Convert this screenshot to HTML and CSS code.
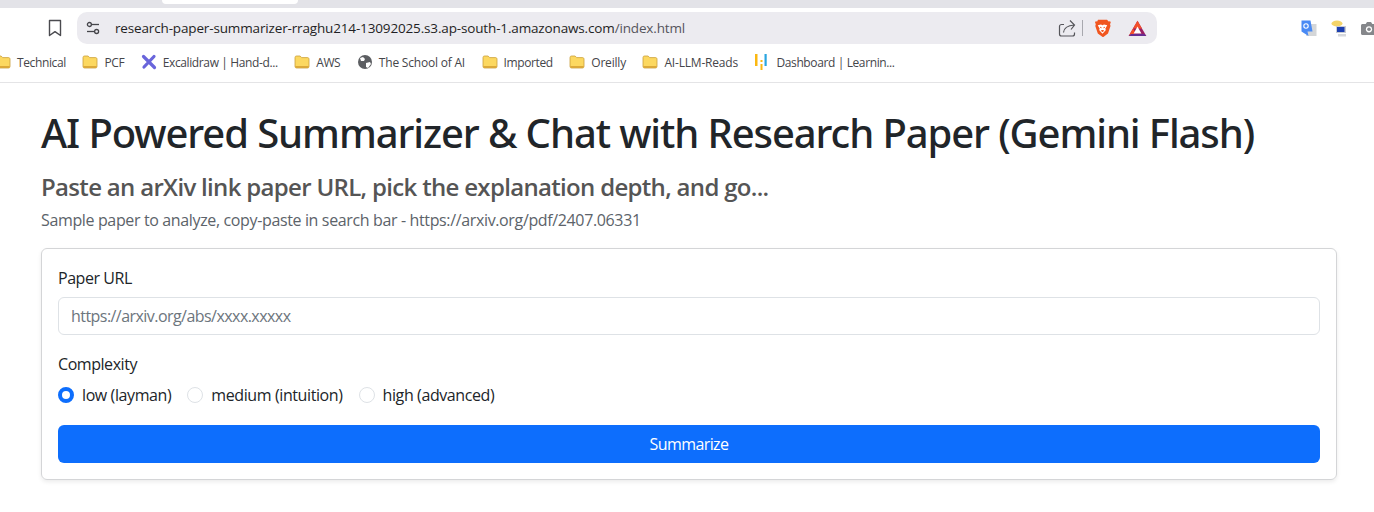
FILE: index.html
```html
<!DOCTYPE html>
<html lang="en">
  <head>
    <meta charset="UTF-8" />
    <meta name="viewport" content="width=device-width, initial-scale=1.0" />
    <title>Research Paper Summarizer</title>
    <link rel="stylesheet" href="styles.css">
  </head>
  <body>
    <svg class="defs" width="0" height="0">
      <symbol id="folder" viewBox="0 0 16 14">
        <path d="M1 2.500C1 1.700 1.600 1 2.400 1h3.700l1.600 1.600h5.900c.8 0 1.400.7 1.400 1.500v7.400c0 .8-.6 1.500-1.400 1.500H2.400c-.8 0-1.400-.7-1.400-1.500z" fill="#fcd860" stroke="#c9a03c" stroke-width=".8"/>
        <path d="M1.200 11.600c0 .8.600 1.300 1.200 1.300h11.200c.6 0 1.200-.5 1.200-1.300v-.6H1.200z" fill="#dca93a"/>
      </symbol>
    </svg>

    <div class="tabstrip">
      <div class="tab"></div>
    </div>

    <div class="toolbar">
      <svg class="bookmark-star" width="16" height="18" viewBox="0 0 16 18">
        <path d="M2.500 1.500h11v15L8 12.600 2.500 16.500z" fill="none" stroke="#4a4a4f" stroke-width="1.400" stroke-linejoin="round"/>
      </svg>
      <div class="omnibox">
        <svg class="site-icon" width="14" height="14" viewBox="0 0 14 14">
          <g fill="none" stroke="#45454a" stroke-width="1.300">
            <circle cx="3.400" cy="3.500" r="2"/>
            <path d="M6 3.500h7"/>
            <circle cx="10.600" cy="10.500" r="2"/>
            <path d="M1 10.500h7"/>
          </g>
        </svg>
        <span class="url">research-paper-summarizer-rraghu214-13092025.s3.ap-south-1.amazonaws.com<span class="url-path">/index.html</span></span>
        <svg class="share-icon" width="18" height="18" viewBox="0 0 18 18">
          <path d="M6 5.500H3.500a2 2 0 0 0-2 2V15a2 2 0 0 0 2 2h11a2 2 0 0 0 2-2v-1.500" fill="none" stroke="#55555a" stroke-width="1.200"/>
          <path d="M5.500 13.500c.4-4.500 3.500-7 10.800-7.500M12 1.500l4.500 4.500-3.500 4.500" fill="none" stroke="#55555a" stroke-width="1.200"/>
        </svg>
        <span class="omni-sep"></span>
        <svg class="brave-icon" width="17" height="19" viewBox="0 0 17 19">
          <path d="M4 .8h9l1.600 1.800 1.600-.3.600 1.500-.8 1.300.5 2-2.500 7.500-4.300 3.200a1.200 1.200 0 0 1-1.400 0L3.800 14.600 1.300 7.100l.5-2L1 3.800l.6-1.500 1.600.3z" fill="#f1561f"/>
          <path d="M3.800 6.200L7 5.600l1.500.6 1.500-.6 3.200.6-1.900 3.600.6 1.300-3.400 3.700-3.400-3.700.6-1.300z" fill="#fff"/>
          <path d="M6 8.200l1.600.6M11 8.200l-1.600.6M7.500 11.500h2L8.500 13z" fill="#f1561f" stroke="#f1561f" stroke-width=".9"/>
        </svg>
        <svg class="bat-icon" width="19" height="17" viewBox="0 0 19 17">
          <path d="M9.500.8L18.300 16H.7z" fill="#9b1f63"/>
          <path d="M9.500.8L14 8.500H5z" fill="#f4502a"/>
          <path d="M.7 16L5 8.500l2 3.500-1.500 2.500z" fill="#f4502a"/>
          <path d="M.7 16h17.600l-2-2H3z" fill="#662d91"/>
          <path d="M9.500 6.500l3.900 6.900H5.600z" fill="#fff"/>
        </svg>
      </div>
      <div class="extensions">
        <svg width="16" height="17" viewBox="0 0 16 17">
          <path d="M7 4h8.500v12H5z" fill="#d4d6d8"/>
          <path d="M.5.500h9l2 11H6.500l1 4.500L.5 11.500z" fill="#4a8af4"/>
          <circle cx="5" cy="6" r="2.200" fill="none" stroke="#fff" stroke-width="1.100"/>
        </svg>
        <svg width="16" height="17" viewBox="0 0 16 17">
          <ellipse cx="6" cy="3.500" rx="5.500" ry="3" fill="#f4d46a"/>
          <rect x="5" y="6" width="10" height="7" fill="#c9ccd2"/>
          <rect x="6" y="7" width="7.500" height="5" fill="#1c3fb0"/>
          <rect x="7" y="14" width="8" height="2.500" fill="#d6d8dc"/>
        </svg>
        <svg width="16" height="15" viewBox="0 0 16 15">
          <path d="M1.500 3h3.200L6 1h4l1.300 2h3.200c.8 0 1.500.7 1.500 1.500v8c0 .8-.7 1.500-1.500 1.500h-13C.7 14 0 13.300 0 12.500v-8C0 3.700.7 3 1.500 3z" fill="#85878b"/>
          <circle cx="8" cy="8.300" r="3.100" fill="#fff"/>
          <circle cx="8" cy="8.300" r="1.800" fill="#85878b"/>
        </svg>
      </div>
    </div>

    <div class="bookmarks">
      <a class="bm bm-first"><svg class="bm-icon"><use href="#folder"/></svg>Technical</a>
      <a class="bm"><svg class="bm-icon"><use href="#folder"/></svg>PCF</a>
      <a class="bm">
        <svg class="bm-icon" viewBox="0 0 16 16">
          <path d="M2.500 2.500L13.500 13.500M13 2.500L3 13" fill="none" stroke="#6965db" stroke-width="3.200" stroke-linecap="round"/>
        </svg>Excalidraw | Hand-d...</a>
      <a class="bm"><svg class="bm-icon"><use href="#folder"/></svg>AWS</a>
      <a class="bm bm-wide">
        <svg class="bm-icon" viewBox="0 0 16 16">
          <circle cx="8" cy="8" r="7" fill="#5c5e62"/>
          <path d="M3 4l3-1 2 2-1 2-3 0zM9 9l4-1 1 2-3 4-2-1z" fill="#fff"/>
        </svg>The School of AI</a>
      <a class="bm"><svg class="bm-icon"><use href="#folder"/></svg>Imported</a>
      <a class="bm bm-wide"><svg class="bm-icon"><use href="#folder"/></svg>Oreilly</a>
      <a class="bm bm-wide"><svg class="bm-icon"><use href="#folder"/></svg>AI-LLM-Reads</a>
      <a class="bm">
        <svg class="bm-icon" viewBox="0 0 16 16">
          <rect x="1" y="0" width="2.500" height="12" fill="#fbb811"/>
          <rect x="6.500" y="6" width="2" height="2" fill="#fbb811"/>
          <rect x="6.500" y="10" width="2" height="6" fill="#fbb811"/>
          <rect x="10.500" y="0" width="2.200" height="12" fill="#2aa5e0"/>
        </svg>Dashboard | Learnin...</a>
    </div>

    <main class="page">
      <h1>AI Powered Summarizer &amp; Chat with Research Paper (Gemini Flash)</h1>
      <h2>Paste an arXiv link paper URL, pick the explanation depth, and go...</h2>
      <p class="sample">Sample paper to analyze, copy-paste in search bar - https://arxiv.org/pdf/2407.06331</p>

      <form class="card">
        <label class="field-label" for="paperUrl">Paper URL</label>
        <input class="field-input" id="paperUrl" type="text" placeholder="https://arxiv.org/abs/xxxx.xxxxx" />

        <div class="field-label complexity-label">Complexity</div>
        <div class="radio-row">
          <label class="radio-item"><input type="radio" name="complexity" checked /><span>low (layman)</span></label>
          <label class="radio-item"><input type="radio" name="complexity" /><span>medium (intuition)</span></label>
          <label class="radio-item"><input type="radio" name="complexity" /><span>high (advanced)</span></label>
        </div>

        <button class="submit-btn" type="button">Summarize</button>
      </form>
    </main>
  </body>
</html>
```

FILE: styles.css
```css
* {
  box-sizing: border-box;
}

html,
body {
  height: 512px;
  overflow: hidden;
}

body {
  margin: 0;
  background: #fff;
  color: #212529;
  font-family: "Open Sans", "Noto Sans", sans-serif;
}

.defs {
  display: block;
  height: 0;
}

.tabstrip {
  height: 8px;
  background: #e3e3e8;
  padding-left: 162px;
}

.tab {
  width: 136px;
  height: 4px;
  background: #fff;
  border-radius: 0 0 8px 8px;
}

.toolbar {
  display: flex;
  align-items: flex-start;
  height: 36px;
  padding-top: 4px;
  padding-left: 47px;
}

.toolbar > * {
  flex-shrink: 0;
}

.bookmark-star {
  margin-top: 7px;
  margin-right: 14px;
}

.omnibox {
  display: flex;
  align-items: center;
  width: 1080px;
  height: 32px;
  padding-left: 9px;
  background: #ecebf0;
  border-radius: 10px;
}

.url {
  margin-left: 15px;
  flex: 1;
  font-size: 13.5px;
  letter-spacing: -0.15px;
  color: #1f1f24;
}

.url-path {
  color: #55555c;
}

.share-icon {
  margin-right: 6px;
}

.omni-sep {
  width: 1px;
  height: 16px;
  background: #a8a8ae;
  margin-right: 11px;
}

.brave-icon {
  margin-right: 17px;
}

.bat-icon {
  margin-right: 10px;
}

.extensions {
  display: flex;
  align-items: center;
  gap: 14px;
  height: 32px;
  margin-left: 144px;
}

.bookmarks {
  display: flex;
  align-items: center;
  height: 39px;
  padding-bottom: 2px;
  border-bottom: 1px solid #e4e4e6;
  white-space: nowrap;
  font-size: 12px;
  letter-spacing: -0.38px;
  color: #45454a;
}

.bm {
  display: flex;
  align-items: center;
  gap: 6px;
  margin-right: 16.5px;
}

.bm-wide {
  letter-spacing: -0.2px;
}

.bm-first {
  margin-left: -5px;
}

.bm-icon {
  width: 16px;
  height: 16px;
}

.page {
  padding: 26px 37px 0 41px;
}

h1 {
  margin: 0 0 15px;
  font-family: "Noto Sans", sans-serif;
  font-size: 40px;
  line-height: 48px;
  font-weight: 500;
  letter-spacing: -1.1px;
  white-space: nowrap;
}

h2 {
  margin: 0 0 7px;
  font-size: 24px;
  line-height: 29px;
  font-weight: 600;
  letter-spacing: -0.68px;
  color: #555;
}

.sample {
  margin: 0 0 16px;
  font-size: 16px;
  line-height: 24px;
  letter-spacing: -0.36px;
  color: #5c636a;
}

.card {
  display: flex;
  flex-direction: column;
  height: 232px;
  padding: 17px 16px;
  border: 1px solid #d4d5d7;
  border-radius: 6px;
  box-shadow: 0 2px 4px rgba(0, 0, 0, 0.08);
}

.field-label {
  font-size: 16px;
  line-height: 24px;
  letter-spacing: -0.45px;
  margin-bottom: 7px;
}

.field-input {
  flex-shrink: 0;
  height: 38px;
  padding: 6px 12px;
  border: 1px solid #dee2e6;
  border-radius: 6px;
  font: inherit;
  font-size: 16px;
  letter-spacing: -0.55px;
}

.field-input::placeholder {
  color: #6c757d;
  opacity: 1;
}

.complexity-label {
  margin-top: 17px;
}

.radio-row {
  display: flex;
  gap: 16px;
  height: 24px;
  margin-bottom: 18px;
}

.radio-item {
  display: flex;
  align-items: center;
  gap: 8px;
  font-size: 16px;
  line-height: 24px;
  letter-spacing: -0.4px;
}

.radio-item input {
  appearance: none;
  width: 16px;
  height: 16px;
  margin: 0;
  background: #fff;
  border: 1px solid #dee2e6;
  border-radius: 50%;
}

.radio-item input:checked {
  border: 4px solid #0d6efd;
}

.submit-btn {
  flex-shrink: 0;
  height: 38px;
  border: 0;
  border-radius: 6px;
  background: #0d6efd;
  color: #fff;
  font: inherit;
  font-size: 16px;
  letter-spacing: -0.6px;
}
```
